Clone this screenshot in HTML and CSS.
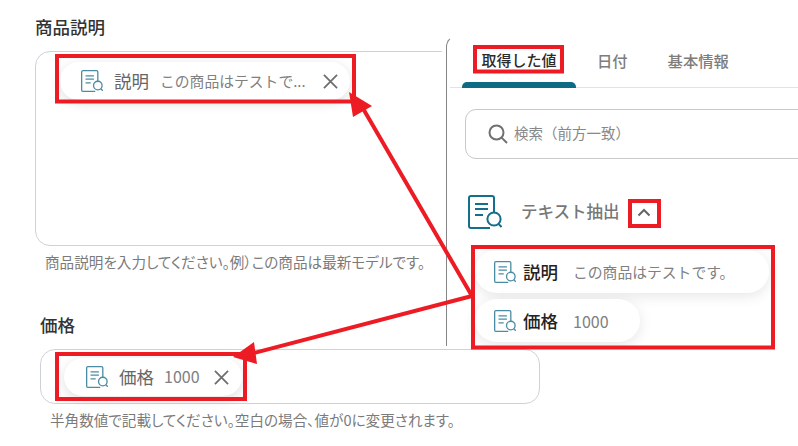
FILE: index.html
```html
<!DOCTYPE html>
<html lang="ja">
<head>
<meta charset="utf-8">
<title>商品説明</title>
<link rel="stylesheet" href="styles.css">
</head>
<body>
<svg class="defs" width="0" height="0" aria-hidden="true">
  <symbol id="doc" viewBox="0 0 34 34">
    <path d="M22 33H3a2 2 0 0 1-2-2V3a2 2 0 0 1 2-2h21a2 2 0 0 1 2 2v14" fill="none" stroke="currentColor" stroke-width="2"/>
    <path d="M7 9h13M7 14h13M7 20h8" fill="none" stroke="currentColor" stroke-width="2"/>
    <circle cx="26" cy="24" r="6.6" fill="none" stroke="currentColor" stroke-width="2"/>
    <path d="M30.6 29l3 3" fill="none" stroke="currentColor" stroke-width="2"/>
  </symbol>
</svg>
<main class="form">
  <section class="field field-desc">
    <h2 class="label">商品説明</h2>
    <div class="box box-desc">
      <div class="chip chip-desc">
        <svg class="icon"><use href="#doc"/></svg>
        <span class="chip-name">説明</span>
        <span class="chip-value chip-value-desc">この商品はテストで...</span>
        <svg class="close" viewBox="0 0 16 16"><path d="M1 1l14 14M15 1L1 15"/></svg>
      </div>
    </div>
    <p class="hint">商品説明を入力してください。例）この商品は最新モデルです。</p>
  </section>
  <section class="field field-price">
    <h2 class="label">価格</h2>
    <div class="box box-price">
      <div class="chip chip-price">
        <svg class="icon"><use href="#doc"/></svg>
        <span class="chip-name">価格</span>
        <span class="chip-value chip-value-price">1000</span>
        <svg class="close" viewBox="0 0 16 16"><path d="M1 1l14 14M15 1L1 15"/></svg>
      </div>
    </div>
    <p class="hint">半角数値で記載してください。空白の場合、値が0に変更されます。</p>
  </section>
</main>
<aside class="panel">
  <nav class="tabs">
    <span class="tab tab-active">取得した値</span>
    <span class="tab tab-date">日付</span>
    <span class="tab tab-info">基本情報</span>
  </nav>
  <div class="search">
    <svg class="search-icon" viewBox="0 0 20 20"><circle cx="8.5" cy="8.5" r="7"/><path d="M13.6 13.6l5.4 5.4"/></svg>
    <span class="search-text">検索（前方一致）</span>
  </div>
  <div class="group">
    <svg class="group-icon"><use href="#doc"/></svg>
    <span class="group-title">テキスト抽出</span>
    <svg class="chevron" viewBox="0 0 14 9"><path d="M1.5 7.5L7 2l5.5 5.5"/></svg>
  </div>
  <div class="results">
    <div class="result result-desc">
      <svg class="icon"><use href="#doc"/></svg>
      <span class="result-name">説明</span>
      <span class="result-value result-value-desc">この商品はテストです。</span>
    </div>
    <div class="result result-price">
      <svg class="icon"><use href="#doc"/></svg>
      <span class="result-name">価格</span>
      <span class="result-value result-value-price">1000</span>
    </div>
  </div>
</aside>
<svg class="marks" viewBox="0 0 798 446" aria-hidden="true">
  <g class="mark-rects">
    <rect x="57" y="56" width="297" height="45.500"/>
    <rect x="57" y="354" width="188" height="45"/>
    <rect x="475" y="47" width="87" height="24.500"/>
    <rect x="630" y="201" width="29" height="25"/>
    <rect x="473" y="247" width="300" height="100.500"/>
  </g>
  <path class="mark-line" d="M472 296L361 105M472 296L250 354"/>
  <path class="mark-head" d="M349 92L372 106L353 117Z"/>
  <path class="mark-head" d="M233 357L254 342L257 364Z"/>
</svg>
</body>
</html>
```
FILE: styles.css
```css
* { box-sizing: border-box; }
html, body { margin: 0; padding: 0; }
body {
  position: relative;
  width: 798px;
  height: 446px;
  overflow: hidden;
  background: #fff;
  font-family: "Noto Sans CJK JP", "Noto Sans", sans-serif;
  color: #333;
}
.defs { position: absolute; }
.form { display: flex; flex-direction: column; padding-top: 14px; }
.label { margin: 0; font-size: 17.500px; line-height: 26px; font-weight: 500; color: #333; }
.hint { margin: 0; font-size: 14.600px; line-height: 20px; color: #7b7b7b; white-space: nowrap; font-feature-settings: "palt"; }
.field-desc { padding-left: 35px; }
.field-desc .label { margin-bottom: 11px; }
.field-desc .hint { margin: 6px 0 0 10px; }
.field-price { padding-left: 40px; margin-top: 40px; }
.field-price .label { margin-bottom: 11px; }
.field-price .hint { margin: 6px 0 0 10px; }
.box { width: 505px; background: #fff; border: 1px solid #cdd2d8; border-radius: 15px; }
.box-desc { height: 195px; padding: 10px 0 0 24px; }
.box-price { width: 500px; height: 55px; padding: 8px 0 0 23px; }
.chip {
  display: flex;
  align-items: center;
  height: 38px;
  background: #fff;
  border-radius: 19px;
  box-shadow: 0 3px 12px rgba(0, 0, 0, .13);
}
.chip-desc { width: 290px; padding-left: 21px; }
.chip-price { width: 178px; padding-left: 22px; }
.icon { width: 22px; height: 22px; flex: none; color: #4a8ca3; }
.chip-name { margin: -2px 0 0 11px; font-size: 17.500px; color: #666; }
.chip-value { margin-top: -2px; font-size: 14.800px; color: #808080; white-space: nowrap; }
.chip-value-desc { margin-left: 11px; width: 163px; }
.chip-value-price { margin-left: 10px; width: 50px; font-size: 16px; }
.close { width: 15px; height: 15px; fill: none; stroke: #6e6e6e; stroke-width: 1.900; }
.panel {
  position: absolute;
  left: 442px;
  top: 35px;
  width: 356px;
  height: 311px;
  padding-left: 4px;
  background: #fff;
  overflow: hidden;
}
.panel::before {
  content: "";
  position: absolute;
  left: 4px;
  top: 0;
  width: 14px;
  height: 100%;
  border-left: 1px solid #858585;
  border-top-left-radius: 12px;
  border-top: 1px solid transparent;
  pointer-events: none;
}
.tabs {
  display: flex;
  height: 53px;
  margin-left: 4px;
  padding-left: 12px;
  border-bottom: 1px solid #e2e2e2;
}
.tab { font-size: 15.300px; font-weight: 500; line-height: 24px; padding-top: 13px; color: #7d7d7d; }
.tab-active {
  position: relative;
  width: 114px;
  text-align: center;
  color: #2b2b2b;
  font-size: 15px;
}
.tab-active::after {
  content: "";
  position: absolute;
  left: 0;
  right: 0;
  bottom: -1px;
  height: 6px;
  background: #0e6b86;
  border-radius: 5px 5px 0 0;
}
.tab-date { margin-left: 21px; }
.tab-info { margin-left: 40px; }
.search {
  display: flex;
  align-items: center;
  width: 400px;
  height: 50px;
  margin: 21px 0 0 19px;
  padding-left: 22px;
  border: 1px solid #c9c9c9;
  border-radius: 11px;
}
.search-icon { width: 20px; height: 20px; fill: none; stroke: #707070; stroke-width: 2; }
.search-text { margin: -4px 0 0 6px; font-size: 14.500px; color: #888; white-space: nowrap; }
.group {
  display: flex;
  align-items: center;
  height: 36px;
  margin: 35px 0 0 22px;
}
.group-icon { width: 34px; height: 34px; color: #136f8a; flex: none; }
.group-title { margin: -2px 0 0 19px; font-size: 16.500px; font-weight: 500; color: #777; white-space: nowrap; }
.chevron { width: 14px; height: 9px; margin: 1px 0 0 17px; fill: none; stroke: #666; stroke-width: 2; }
.results { display: flex; flex-direction: column; gap: 6px; margin: 20px 0 0 29px; }
.result {
  display: flex;
  align-items: center;
  height: 43px;
  padding-left: 19px;
  background: #fff;
  border-radius: 22px;
  box-shadow: 0 3px 14px rgba(0, 0, 0, .1);
}
.result-desc { width: 294px; }
.result-price { width: 165px; }
.result-name { margin-left: 7px; font-size: 17.500px; font-weight: 500; color: #222; }
.result-value { font-size: 14.800px; color: #808080; white-space: nowrap; }
.result-value-desc { margin-left: 15px; }
.result-value-price { margin-left: 15px; font-size: 16px; }
.marks { position: absolute; left: 0; top: 0; width: 798px; height: 446px; pointer-events: none; }
.mark-rects rect { fill: none; stroke: #ed1c24; stroke-width: 4; }
.mark-line { fill: none; stroke: #ed1c24; stroke-width: 4; }
.mark-head { fill: #ed1c24; }
```
